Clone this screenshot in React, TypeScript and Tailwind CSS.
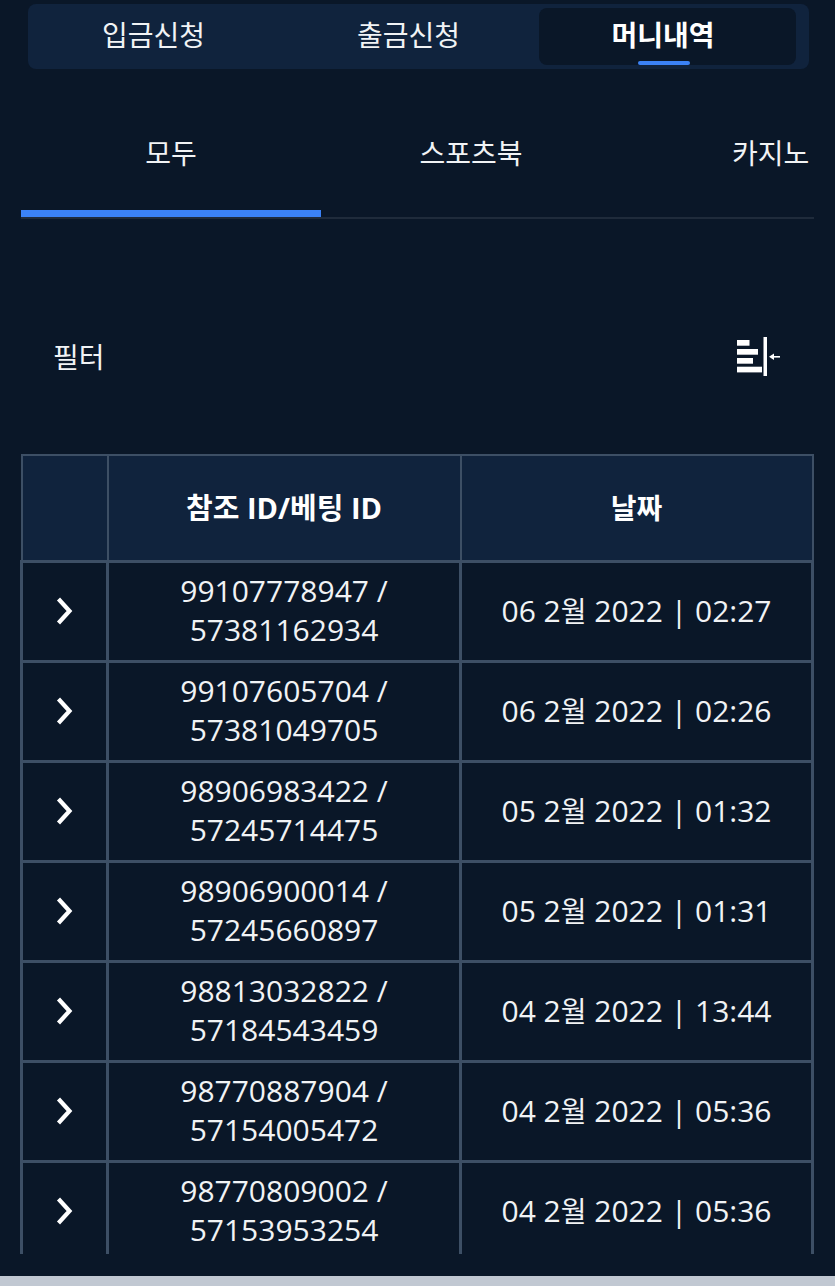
import React from "react";

const rows = [
  ["99107778947 /", "57381162934", "06", "2022 | 02:27"],
  ["99107605704 /", "57381049705", "06", "2022 | 02:26"],
  ["98906983422 /", "57245714475", "05", "2022 | 01:32"],
  ["98906900014 /", "57245660897", "05", "2022 | 01:31"],
  ["98813032822 /", "57184543459", "04", "2022 | 13:44"],
  ["98770887904 /", "57154005472", "04", "2022 | 05:36"],
  ["98770809002 /", "57153953254", "04", "2022 | 05:36"],
];

const Chevron = () => (
  <svg width="18" height="28" viewBox="0 0 18 28" fill="none">
    <path d="M2.5 2 L13.5 14 L2.5 26" stroke="#fff" strokeWidth="4.2" />
  </svg>
);

const FilterIcon = () => (
  <svg width="44" height="40" viewBox="0 0 44 40" fill="#fff">
    <rect x="1" y="3" width="12.5" height="5.7" />
    <rect x="1" y="12" width="21" height="5.7" />
    <rect x="1" y="21" width="16" height="5.7" />
    <rect x="1" y="29.7" width="25" height="5.7" />
    <rect x="27.5" y="0" width="3.5" height="39" />
    <rect x="36" y="19" width="8" height="1.6" />
    <path d="M33 19.8 L38 16.5 V23 Z" />
  </svg>
);

export default function App() {
  return (
    <div
      className="w-[835px] h-[1286px] bg-[#0a1728] text-white flex flex-col overflow-hidden"
      style={{ fontFamily: '"Open Sans", "Noto Sans CJK KR", sans-serif' }}
    >
      <div className="pt-1 pl-7 pr-[26px]">
        <div className="h-[65px] bg-[#10233d] rounded-lg py-1 pl-1 pr-[13px] flex items-stretch text-[28px] leading-none">
          <div className="w-[243px] flex items-center justify-center pb-[3px] text-[#f1f3f5]">입금신청</div>
          <div className="w-[264px] pl-[3px] flex items-center justify-center pb-[3px] text-[#f1f3f5]">출금신청</div>
          <div className="relative flex-1 rounded-lg bg-[#0a1728] flex items-center justify-center pb-[3px] pr-[9px] font-bold">
            머니내역
            <span className="absolute bottom-0 left-[99px] w-[52px] h-1 rounded-sm bg-[#3b82f6]" />
          </div>
        </div>
      </div>

      <div className="mt-[46px] ml-[21px] w-[793px] h-[104px] relative overflow-hidden flex items-start border-b-2 border-[#1f2b3b] text-[28px] leading-none text-[#f1f3f5]">
        <div className="shrink-0 w-[300px] h-[102px] border-b-[7px] border-[#3b82f6] pt-[24px] text-center">모두</div>
        <div className="shrink-0 w-[300px] pt-[24px] text-center">스포츠북</div>
        <div className="shrink-0 w-[300px] pt-[24px] pl-[111px] text-left whitespace-nowrap">카지노</div>
      </div>

      <div className="mt-[118px] pl-[53px] pr-[55px] flex items-center justify-between h-[40px]">
        <span className="text-[28px] leading-none text-[#f1f3f5]">필터</span>
        <FilterIcon />
      </div>

      <div className="mt-[77px] ml-[20px] w-[794px] h-[800px] overflow-hidden">
        <table className="w-full table-fixed border-collapse text-center">
          <thead>
            <tr className="h-[106px] bg-[#10233d] text-[29px] font-bold">
              <th className="w-[86px] border-2 border-[#3d4f65]" />
              <th className="w-[353px] border-2 border-[#3d4f65]">참조 ID/베팅 ID</th>
              <th className="border-2 border-[#3d4f65] text-[28px]">날짜</th>
            </tr>
          </thead>
          <tbody className="text-[30px] leading-[39px] text-[#f1f3f5]">
            {rows.map((r, i) => (
              <tr key={i} className="h-[100px]">
                <td className="border-[3px] border-[#3d4f65]">
                  <div className="flex justify-center">
                    <Chevron />
                  </div>
                </td>
                <td className="border-[3px] border-[#3d4f65] pb-[2px]">
                  {r[0]}
                  <br />
                  {r[1]}
                </td>
                <td className="border-[3px] border-[#3d4f65] whitespace-nowrap">
                  {r[2]} 2<span className="text-[28px]">월</span> {r[3]}
                </td>
              </tr>
            ))}
          </tbody>
        </table>
      </div>

      <div className="mt-[22px] flex-1 bg-[#c1c8d2]" />
    </div>
  );
}
